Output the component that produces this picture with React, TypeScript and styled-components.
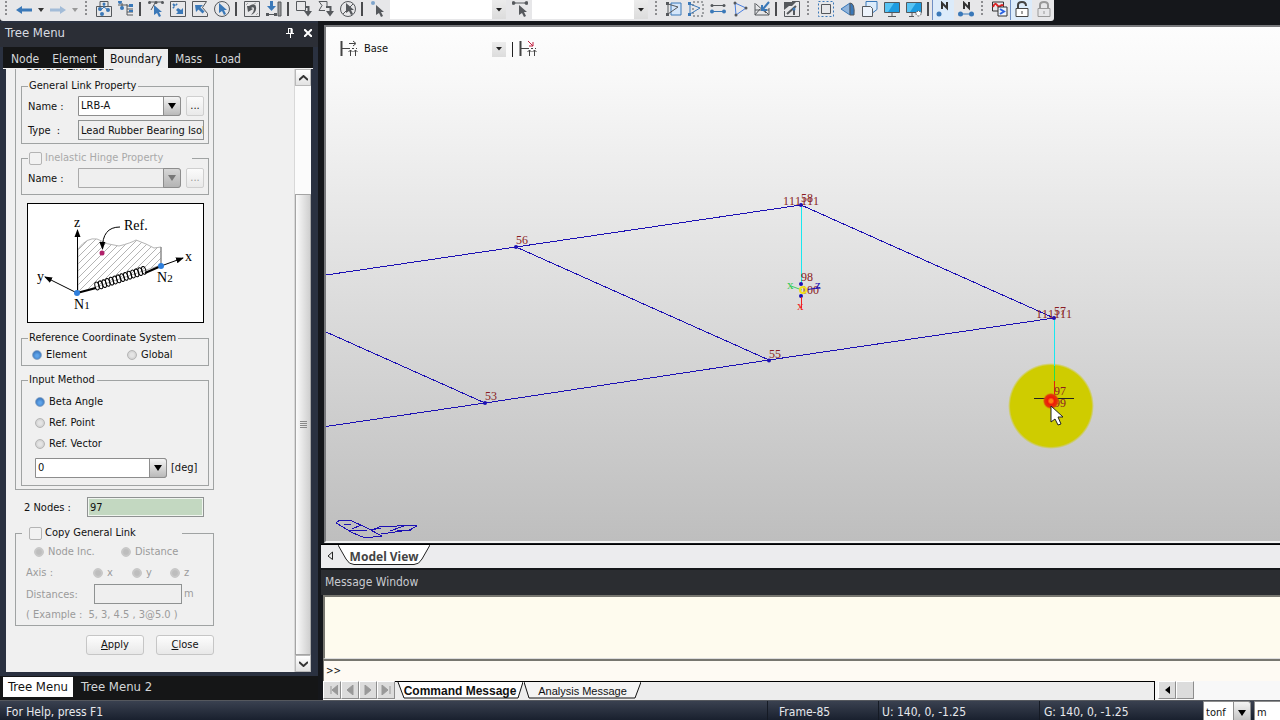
import React from "react";
import styled, { createGlobalStyle, css } from "styled-components";

const ui = `"DejaVu Sans Condensed", "Noto Sans", sans-serif`;
const BLUE = "#3a78b8";
const GRAY = "#55585c";

const GlobalStyle = createGlobalStyle`
  * { box-sizing: border-box; }
  body { margin: 0; background: #15171b; }
  button, input, select { font: inherit; color: inherit; margin: 0; }
`;

const Shell = styled.div`
  display: flex;
  flex-direction: column;
  height: 100vh;
  min-height: 720px;
  overflow: hidden;
  background: #15171b;
  color: #111;
  font: 11px/14px ${ui};
`;

const Workspace = styled.div`
  display: grid;
  grid-template-columns: 321px minmax(0, 1fr);
  flex: 1;
  min-height: 0;
`;

/* ---------- toolbar ---------- */

const Toolbar = styled.div`
  display: flex;
  align-items: flex-start;
  align-self: flex-start;
  height: 21px;
  background: #e7e7e9;
  border-radius: 0 0 3px 3px;
`;

const ToolButton = styled.button<{ $on?: boolean }>`
  display: flex;
  justify-content: center;
  width: 22px;
  height: 20px;
  padding: 1px 0 0;
  border: 0;
  border-left: 1px solid ${(p) => (p.$on ? "#6f8fc4" : "transparent")};
  background: ${(p) => (p.$on ? "#dcebfa" : "transparent")};
`;

const CaretButton = styled(ToolButton)`
  width: 12px;
`;

const Grip = styled.span`
  width: 12px;
  height: 17px;
  background: radial-gradient(circle, #8d8d90 1px, transparent 1px) 4px 0 / 4px 4px repeat-y;
`;

const Divider = styled.span`
  width: 2px;
  height: 14px;
  margin: 2px 3px 0;
  background: #4a4b4e;
`;

const Combo = styled.span<{ $w: string; $h: number; $variant: "flat" | "form" | "disabled" }>`
  display: grid;
  grid-template-columns: minmax(0, 1fr) auto;
  flex: none;
  width: ${(p) => p.$w};
  height: ${(p) => p.$h}px;
  select {
    grid-area: 1 / 1 / 2 / 3;
    appearance: none;
    min-width: 0;
    padding: 0 18px 0 2px;
    border: 0;
    border-radius: 0 3px 3px 0;
    background: #fff;
    outline: 0;
    ${(p) =>
      p.$variant !== "flat" &&
      css`
        border: 1px solid #8d8d8d;
      `}
    ${(p) =>
      p.$variant === "disabled" &&
      css`
        background: #efefef;
      `}
  }
`;

const ComboArrow = styled.span<{ $variant: "flat" | "form" | "disabled" }>`
  grid-area: 1 / 2;
  display: flex;
  align-items: center;
  justify-content: center;
  width: 14px;
  z-index: 1;
  background: linear-gradient(#ececec, #dcdcdc);
  pointer-events: none;
  ${(p) =>
    p.$variant !== "flat" &&
    css`
      width: 18px;
      border: 1px solid #8d8d8d;
      border-radius: 0 3px 3px 0;
      background: ${p.$variant === "disabled" ? "linear-gradient(#d6d6d6, #b4b4b4)" : "linear-gradient(#f4f4f4, #b9b9b9)"};
    `}
`;

const ComboSlot = styled.span`
  display: flex;
  margin: 0 2px;
`;

function Select(props: {
  label: string;
  w: string;
  h?: number;
  value?: string;
  variant?: "flat" | "form" | "disabled";
}) {
  const v = props.variant ?? "form";
  return (
    <Combo $w={props.w} $h={props.h ?? 20} $variant={v}>
      <select aria-label={props.label} disabled={v === "disabled"}>
        <option>{props.value ?? ""}</option>
      </select>
      <ComboArrow $variant={v}>
        {v === "flat" ? (
          <svg width="6" height="4"><path d="M0 0h6L3 3.500z" fill="#222" /></svg>
        ) : (
          <svg width="8" height="6"><path d="M0 0h8L4 6z" fill={v === "disabled" ? "#777" : "#000"} /></svg>
        )}
      </ComboArrow>
    </Combo>
  );
}

const Pointer = ({ x = 0, y = 0, c = BLUE }: { x?: number; y?: number; c?: string }) => (
  <path transform={`translate(${x} ${y})`} d="M0 0l8 7H5l2 4-2 1-2-4-3 2z" fill={c} stroke="none" />
);

const icons: Record<string, React.ReactNode> = {
  undo: <path d="M0 9l6-4v2.500h10v3H6V13z" fill={BLUE} stroke="none" />,
  redo: <path d="M16 9l-6-4v2.500H0v3h10V13z" fill="#a3bcd8" stroke="none" />,
  groups: (
    <>
      <path d="M4 5V.5h8V5M.5 5.500h15v10H.5z" />
      <path d="M8 3v3l-4 4M8 6l4 3" stroke={BLUE} />
      <g fill={BLUE} stroke="none"><circle cx="8" cy="3" r="1.500" /><circle cx="4" cy="8" r="2" /><circle cx="12" cy="9" r="2" /><circle cx="6" cy="13" r="2" /></g>
    </>
  ),
  tree: (
    <>
      <path d="M4 2v4M4 4h5M9 3v11M9 5h6M9 8h6M9 11h6M9 14h6M0 4h4" />
      <g fill={BLUE} stroke="none"><circle cx="2" cy="1" r="2" /><circle cx="4" cy="7" r="2" /><path d="M11 3h4v3h-4zM11 9h4v2h-4z" /></g>
    </>
  ),
  polySelect: (
    <>
      <path d="M1 1h14M7 2L3 9" />
      <g fill={GRAY} stroke="none"><circle cx="1.500" cy="1.500" r="1.500" /><circle cx="8" cy="1.500" r="1.500" /><circle cx="14.500" cy="1.500" r="1.500" /></g>
      <Pointer x={6} y={4} />
    </>
  ),
  windowSelect: (
    <>
      <path d="M.5.5h15v15H.5z" />
      <path d="M3 3l2 2M6 3l1 1M3 6l1 1" stroke={BLUE} strokeWidth="2" />
      <path d="M13 13H6l2-2-2-2 2-2 3 2 2-2z" fill={BLUE} stroke="none" />
    </>
  ),
  polygonSelect: (
    <>
      <path d="M.5.500h14l-4 6 5 6v3H.5z" />
      <path d="M3 4h8L8.500 6.500l4 4-2 2-4-4L4 11z" fill={BLUE} stroke="none" />
    </>
  ),
  circleSelect: (<><circle cx="8" cy="8" r="7.500" /><Pointer x={5} y={2} /></>),
  planeSelect: (
    <>
      <path d="M.5.500h15v15H.5z" />
      <path d="M3 5l1 6 5-3-2-1q3-2 3 1t-3 6q6-3 5-8t-7-1z" fill={GRAY} stroke="none" />
      <path d="M2 4l2-2M10 3l2-1M12 14l2-2" stroke="#aaa" />
    </>
  ),
  volumeSelect: (
    <>
      <path d="M5.500 0v5" stroke={BLUE} strokeWidth="3" /><path d="M1 5h9l-4.500 5z" fill={BLUE} stroke="none" />
      <path d="M1 13.500h9" /><path d="M12 1h3v14h-3z" fill="#999" />
      <path d="M0 12h3v3H0zM8 12h3v3H8z" fill={GRAY} stroke="none" />
    </>
  ),
  prevSelect: (<><path d="M.5.500h9v9h-9z" /><path d="M9 6h3.500v4" strokeWidth="2" /><path d="M8 10h8l-4 5.500z" fill={GRAY} stroke="none" /></>),
  unselect: (<><path d="M9 6V.500H1l3 4-3 5h6" /><path d="M8 6h4.500v4" strokeWidth="2" /><path d="M8 10h8l-4 5.500z" fill={GRAY} stroke="none" /></>),
  unselectCircle: (<><circle cx="8" cy="8" r="7.500" /><Pointer x={6} y={2} c={GRAY} /><path d="M3 13L13 3" /></>),
  nodePick: (<><circle cx="3" cy="2" r="2" fill={BLUE} stroke="none" opacity=".6" /><Pointer x={6} y={4} c={GRAY} /></>),
  elementPick: (
    <>
      <path d="M2 2h12" /><circle cx="1.500" cy="2" r="1.500" fill={GRAY} /><circle cx="14.500" cy="2" r="1.500" fill={GRAY} />
      <Pointer x={7} y={4} c={GRAY} />
    </>
  ),
  activate: (
    <>
      <path d="M5 2h10v12H5z" fill="#d4e6fa" stroke={BLUE} /><path d="M2 2v12M2 3l10 3-10 7" />
      <path d="M0 1h3v3H0zM0 12h3v3H0z" fill={GRAY} stroke="none" />
    </>
  ),
  inactivate: (
    <>
      <path d="M5 1h10v14H5z" strokeDasharray="2 2" /><path d="M2 2v12M2 3l10 4-10 6" stroke={BLUE} />
      <path d="M0 1h3v3H0zM0 12h3v3H0z" fill={BLUE} stroke="none" />
    </>
  ),
  activeAll: (
    <>
      <path d="M1 4.500h14" /><path d="M1 10.500h14" stroke={BLUE} />
      <g fill={GRAY} stroke="none"><circle cx="2" cy="4.500" r="1.500" /><circle cx="14" cy="4.500" r="1.500" /></g>
      <g fill={BLUE} stroke="none"><circle cx="2" cy="10.500" r="2" /><circle cx="14" cy="10.500" r="2" /></g>
    </>
  ),
  triangle: (
    <>
      <path d="M3 2l11 5-10 7z" stroke="#4a7fe0" />
      <g fill={GRAY} stroke="none"><circle cx="3" cy="2" r="1.500" /><circle cx="14" cy="7" r="1.500" /><circle cx="4" cy="14" r="1.500" /></g>
    </>
  ),
  previousActive: (
    <>
      <path d="M1 2v12h14V7M1 14l5-6M1 9h14M2 3l10 9M15 14L9 8" /><path d="M15 1l-6 7M8 4v5h5" stroke={BLUE} strokeWidth="2" />
    </>
  ),
  identity: (
    <>
      <path d="M8 .500h7.500v15H.5V10" /><path d="M0 1h8l4 0-4 4H5l-5 4z" fill={GRAY} stroke="none" /><path d="M3 13L12 5M10 14V8" strokeWidth="2" /><circle cx="10" cy="8" r="1.500" fill={BLUE} stroke="none" />
    </>
  ),
  zoomFit: (
    <>
      <path d="M3.500 3.500h9v9h-9z" /><path d="M.5.500h15v15H.5z" stroke={BLUE} strokeDasharray="2 2" />
    </>
  ),
  perspective: (<><path d="M1 8l9-6v12z" fill="#8fb4dc" stroke={BLUE} /><path d="M10 2q5 0 4 12h-4z" fill={BLUE} stroke={GRAY} /></>),
  hidden: (<><path d="M4 .500h11v8l-4 3H4z" fill="#dcecfb" stroke={BLUE} /><path d="M.5 5.500h8l2 2v8H.5z" fill="#eef4fb" /></>),
  display: (<><path d="M.5 1.500h15v10H.5z" fill="#1d9be0" /><path d="M1 2h9l-6 9H1z" fill="#58c4f4" stroke="none" /><path d="M8 12v3M4 15.500h8" /></>),
  displayOptions: (
    <><path d="M.5 1.500h15v10H.5z" fill="#1d9be0" /><path d="M1 2h9l-6 9H1z" fill="#58c4f4" stroke="none" /><path d="M6 12v3M3 15.500h5" /><circle cx="12.500" cy="12.500" r="2.500" strokeDasharray="2 1" fill="#fff" /></>
  ),
  nodeNumber: (<><path d="M6 8V2l5 5V1" strokeWidth="2" stroke="#333" /><circle cx="3" cy="13" r="2.500" fill={BLUE} stroke="none" /></>),
  elementNumber: (
    <><path d="M6 8V2l5 5V1" strokeWidth="2" stroke="#333" /><path d="M2 13h12" stroke={BLUE} /><circle cx="2.500" cy="13" r="2.500" fill={BLUE} stroke="none" /><circle cx="13.500" cy="13" r="2.500" fill={BLUE} stroke="none" /></>
  ),
  redraw: (
    <><path d="M.5 1h11v9H.5z" stroke="#333" /><path d="M1 6c2-5 3-3 5-1s4-3 5 0" stroke="#d22" strokeWidth="2" /><path d="M6 6h9v9H6z" fill="#eef4fb" stroke="#333" /><path d="M8 8l4 2.500L8 13" stroke="#2c62e0" strokeWidth="2" /></>
  ),
  unlock: (<><path d="M2 7.500h12v8H2z" fill="#fff" stroke="#444" /><path d="M4 7V4q0-3 4-3t4 4" stroke="#444" strokeWidth="2" /><path d="M8 10v3" stroke="#444" /></>),
  lock: (<><path d="M2 7.500h12v8H2z" stroke="#999" /><path d="M4 7V4q0-3 4-3t4 3v3" stroke="#999" strokeWidth="2" /><path d="M8 10v3" stroke="#999" /></>),
};

function Tool({ name, on }: { name: string; on?: boolean }) {
  return (
    <ToolButton aria-label={name} $on={on}>
      <svg width="16" height="16" viewBox="0 0 16 16" fill="none" stroke={GRAY}>{icons[name]}</svg>
    </ToolButton>
  );
}

function Caret({ label, c }: { label: string; c: string }) {
  return (
    <CaretButton aria-label={label}>
      <svg width="6" height="16"><path d="M0 7h6L3 11z" fill={c} /></svg>
    </CaretButton>
  );
}

const Tools = ({ names }: { names: string[] }) => <>{names.map((n) => <Tool key={n} name={n} />)}</>;

function MainToolbar() {
  return (
    <Toolbar role="toolbar">
      <Grip />
      <Tool name="undo" />
      <Caret label="undo list" c="#333" />
      <Tool name="redo" />
      <Caret label="redo list" c="#999" />
      <Grip />
      <Tools names={["groups", "tree"]} />
      <Divider />
      <Tools names={["polySelect", "windowSelect", "polygonSelect", "circleSelect"]} />
      <Divider />
      <Tools names={["planeSelect", "volumeSelect"]} />
      <Divider />
      <Tools names={["prevSelect", "unselect", "unselectCircle"]} />
      <Divider />
      <Tool name="nodePick" />
      <ComboSlot><Select label="Node selection" w="116px" h={19} variant="flat" /></ComboSlot>
      <Tool name="elementPick" />
      <ComboSlot><Select label="Element selection" w="116px" h={19} variant="flat" /></ComboSlot>
      <Grip />
      <Tools names={["activate", "inactivate", "activeAll", "triangle", "previousActive"]} />
      <Divider />
      <Tool name="identity" />
      <Grip />
      <Tools names={["zoomFit", "perspective", "hidden", "display", "displayOptions"]} />
      <Divider />
      <Tool name="nodeNumber" on />
      <Tool name="elementNumber" />
      <Grip />
      <Tool name="redraw" />
      <Tool name="unlock" on />
      <Tool name="lock" />
    </Toolbar>
  );
}

/* ---------- left dock ---------- */

const Dock = styled.aside`
  display: flex;
  flex-direction: column;
  min-height: 0;
  padding-top: 2px;
  margin-right: 3px;
  background: #2a3140;
`;

const DockTitle = styled.header`
  display: flex;
  align-items: center;
  gap: 10px;
  height: 24px;
  padding: 0 6px 4px 5px;
  background: #2b2e36;
  color: #d9dce2;
  font-size: 13px;
  line-height: 18px;
  h2 { flex: 1; margin: 0; font: inherit; }
`;

const PlainButton = styled.button`
  display: flex;
  padding: 0;
  border: 0;
  background: none;
`;

const TabStrip = styled.nav`
  display: flex;
  gap: 1px;
  height: 22px;
  margin: 0 5px 0 3px;
  padding: 2px 2px 0;
  background: #151617;
  border-bottom: 1px solid #f2f2f2;
`;

const Tab = styled.button<{ $active?: boolean }>`
  padding: 0 6px;
  border: 0;
  background: ${(p) => (p.$active ? "#ededee" : "transparent")};
  color: ${(p) => (p.$active ? "#111" : "#d4d6d9")};
  font-size: 12px;
  line-height: 18px;
`;

const DockBody = styled.div`
  display: flex;
  flex: 1;
  min-height: 0;
  margin: 0 7px 0 6px;
  background: #f0f0f0;
`;

/* Scrolled to the end, so the form keeps its last row in view. */
const FormScroll = styled.div`
  display: flex;
  flex-direction: column;
  justify-content: flex-end;
  flex: 1;
  min-width: 0;
  overflow: hidden;
`;

const Form = styled.form`
  display: flex;
  flex-direction: column;
  width: 199px;
  margin-left: 9px;
  padding-bottom: 17px;
`;

const Group = styled.fieldset<{ $pad: string; $gap?: number; $top?: number }>`
  display: flex;
  flex-direction: column;
  gap: ${(p) => p.$gap ?? 0}px;
  min-width: 0;
  margin: ${(p) => p.$top ?? 0}px 0 0;
  padding: ${(p) => p.$pad};
  border: 1px solid #a0a3a3;
`;

const Legend = styled.legend<{ $w?: number; $muted?: boolean; $indent?: number }>`
  display: flex;
  align-items: center;
  gap: 3px;
  height: 14px;
  width: ${(p) => (p.$w ? `${p.$w}px` : "auto")};
  margin-left: ${(p) => p.$indent ?? 0}px;
  padding: 0 2px 0 1px;
  color: ${(p) => (p.$muted ? "#a9a9a9" : "#111")};
  white-space: nowrap;
`;

const Row = styled.div<{ $h?: number; $gap?: number; $muted?: boolean }>`
  display: flex;
  align-items: center;
  gap: ${(p) => p.$gap ?? 0}px;
  height: ${(p) => p.$h ?? 20}px;
  color: ${(p) => (p.$muted ? "#9b9b9b" : "#111")};
  white-space: nowrap;
`;

const FieldName = styled.label<{ $w: number }>`
  width: ${(p) => p.$w}px;
  flex: none;
  padding-top: 2px;
`;

const Choice = styled.label<{ $w?: number }>`
  display: flex;
  align-items: center;
  gap: 4px;
  width: ${(p) => (p.$w ? `${p.$w}px` : "auto")};
`;

const Radio = styled.input.attrs({ type: "radio" })`
  appearance: none;
  width: 10px;
  height: 10px;
  flex: none;
  border: 1px solid #b5b5b5;
  border-radius: 50%;
  background: radial-gradient(circle, #e4e4e4 30%, #c4c4c4);
  &:checked {
    border-color: #8aa5c6;
    background: radial-gradient(circle at 50% 60%, #5fa4ea 20%, #2a62a8);
  }
  &:disabled { background: radial-gradient(circle, #bdbdbd 40%, #d9d9d9); border-color: #c8c8c8; }
`;

const Check = styled.input.attrs({ type: "checkbox" })`
  appearance: none;
  width: 13px;
  height: 13px;
  flex: none;
  border: 1px solid #b4b4b4;
  border-radius: 2px;
  background: #f2f2f2;
`;

const Field = styled.input<{ $tone?: "green" | "off"; $w?: number }>`
  width: ${(p) => (p.$w ? `${p.$w}px` : "auto")};
  flex: ${(p) => (p.$w ? "none" : "1")};
  min-width: 0;
  height: 20px;
  padding: 0 0 0 2px;
  border: 1px solid #8f9292;
  border-radius: 0;
  background: ${(p) => (p.$tone === "green" ? "#c3d8c1" : "#efefef")};
  box-shadow: inset 0 0 0 1px ${(p) => (p.$tone === "green" ? "#f0f5ef" : "transparent")};
`;

const SmallButton = styled.button`
  width: 19px;
  height: 20px;
  margin-left: 5px;
  padding: 0;
  border: 1px solid #cfcfcf;
  border-radius: 2px;
  background: linear-gradient(#fbfbfb, #e9e9e9);
  &:disabled { color: #999; }
`;

const Figure = styled.figure`
  height: 120px;
  margin: 8px 5px 0 6px;
  border: 1px solid #000;
  background: #fff;
  svg { display: block; }
`;

const Actions = styled.div`
  display: flex;
  justify-content: flex-end;
  gap: 12px;
  margin-top: 9px;
`;

const PushButton = styled.button`
  width: 58px;
  height: 20px;
  padding: 0;
  border: 1px solid #c6c6c6;
  border-radius: 3px;
  background: linear-gradient(#fdfdfd, #e8e8e8);
`;

const ScrollBar = styled.div`
  display: flex;
  flex-direction: column;
  width: 17px;
  background: #fbfbfb;
  border-left: 1px solid #d8d8d8;
`;

const ScrollButton = styled.button`
  display: flex;
  align-items: center;
  justify-content: center;
  height: 17px;
  padding: 0;
  border: 1px solid #b9b9b9;
  background: linear-gradient(#fff, #e2e2e2);
`;

const ScrollTrack = styled.div`
  display: flex;
  flex: 1;
  align-items: flex-end;
`;

const ScrollThumb = styled.div`
  display: flex;
  align-items: center;
  justify-content: center;
  width: 100%;
  height: 81%;
  border: 1px solid #a4a4a4;
  background: linear-gradient(90deg, #fafafa, #cfcfcf);
`;

const DockTabs = styled.nav`
  display: flex;
  height: 24px;
  margin-top: 4px;
  padding: 1px 3px 3px;
  background: #151617;
`;

const DockTab = styled(Tab)`
  margin-right: 3px;
  padding: 0 5px;
  background: ${(p) => (p.$active ? "#fff" : "transparent")};
  font-size: 13px;
`;

function LinkDiagram() {
  const coils = Array.from({ length: 14 }, (_, i) => ({ x: 70 + i * 3.6, y: 83 - i * 1.2 }));
  return (
    <svg width="175" height="118" viewBox="1 1 175 118" fill="none" stroke="#000">
      <defs>
        <pattern id="hatch" width="7" height="7" patternUnits="userSpaceOnUse">
          <path d="M-1 8L8-1" stroke="#b4b4b4" />
        </pattern>
        <marker id="tip" orient="auto" markerUnits="userSpaceOnUse" markerWidth="8" markerHeight="8" refX="7" refY="4">
          <path d="M0 1l8 3-8 3z" fill="#000" stroke="none" />
        </marker>
      </defs>
      <path d="M51 46Q60 34 70 36Q80 42 92 43Q104 40 109 37Q120 41 127 45L134 44V62L51 90z" fill="url(#hatch)" stroke="#b5b5b5" />
      <path d="M134 44v18" stroke="#777" />
      <path d="M50.500 90V27" markerEnd="url(#tip)" />
      <path d="M50 90L18 74" markerEnd="url(#tip)" />
      <path d="M134 63l22-8" markerEnd="url(#tip)" />
      <path d="M50 90l19-5M118 70l16-7" strokeWidth="2" />
      {coils.map((c) => <ellipse key={c.x} cx={c.x} cy={c.y} rx="2" ry="4" transform={`rotate(-15 ${c.x} ${c.y})`} />)}
      <path d="M93 24Q75 24 75.500 46" markerEnd="url(#tip)" />
      <circle cx="75" cy="50" r="2.500" fill="#b0206a" stroke="none" />
      <g fill="#2f7fdc" stroke="none"><circle cx="50" cy="90" r="3" /><circle cx="134" cy="63" r="3" /></g>
      <g fill="#000" stroke="none" fontFamily="'Liberation Serif', serif" fontSize="14">
        <text x="47" y="24">z</text>
        <text x="97" y="27">Ref.</text>
        <text x="158" y="58">x</text>
        <text x="10" y="78">y</text>
        <text x="47" y="106">N<tspan fontSize="11">1</tspan></text>
        <text x="130" y="79">N<tspan fontSize="11">2</tspan></text>
      </g>
    </svg>
  );
}

function LinkForm() {
  return (
    <Form onSubmit={(e) => e.preventDefault()}>
      <Group $pad="5px 4px 3px 5px">
        <Legend $indent={3}>General Link Data</Legend>
        <Group $pad="3px 4px 3px 6px" $gap={4}>
          <Legend>General Link Property</Legend>
          <Row>
            <FieldName $w={50}>Name :</FieldName>
            <Select label="Property name" w="103px" value="LRB-A" />
            <SmallButton>...</SmallButton>
          </Row>
          <Row>
            <FieldName $w={50} htmlFor="type">Type&nbsp; :</FieldName>
            <Field id="type" readOnly value="Lead Rubber Bearing Isolator" />
          </Row>
        </Group>
        <Group $pad="3px 4px 6px 6px" $top={7}>
          <Legend $w={164} $muted><Check id="hinge" disabled /><label htmlFor="hinge">Inelastic Hinge Property</label></Legend>
          <Row>
            <FieldName $w={50}>Name :</FieldName>
            <Select label="Hinge name" w="103px" variant="disabled" />
            <SmallButton disabled>...</SmallButton>
          </Row>
        </Group>
        <Figure><LinkDiagram /></Figure>
        <Group $pad="3px 4px 3px 10px" $top={8}>
          <Legend $indent={-4}>Reference Coordinate System</Legend>
          <Row $h={14}>
            <Choice $w={95}><Radio name="ref" defaultChecked />Element</Choice>
            <Choice><Radio name="ref" />Global</Choice>
          </Row>
        </Group>
        <Group $pad="8px 4px 7px 13px" $gap={7} $top={7}>
          <Legend $indent={-7}>Input Method</Legend>
          <Row $h={14}><Choice><Radio name="method" defaultChecked />Beta Angle</Choice></Row>
          <Row $h={14}><Choice><Radio name="method" />Ref. Point</Choice></Row>
          <Row $h={14}><Choice><Radio name="method" />Ref. Vector</Choice></Row>
          <Row $gap={4}><Select label="Beta angle" w="132px" value="0" />[deg]</Row>
        </Group>
      </Group>
      <NodesRow>
        <FieldName $w={63} htmlFor="nodes">2 Nodes :</FieldName>
        <Field id="nodes" $tone="green" $w={117} defaultValue="97" />
      </NodesRow>
      <Group $pad="2px 4px 0 10px" $gap={1} $top={9}>
        <Legend $w={160} $indent={-4}><LegendInner><Check id="copy" /><label htmlFor="copy">Copy General Link</label></LegendInner></Legend>
        <Row $muted>
          <Indent $w={8} />
          <Choice $w={87}><Radio name="copy" disabled />Node Inc.</Choice>
          <Choice><Radio name="copy" disabled />Distance</Choice>
        </Row>
        <Row $muted>
          <Indent $w={67}>Axis :</Indent>
          <Choice $w={39}><Radio name="axis" disabled />x</Choice>
          <Choice $w={38}><Radio name="axis" disabled />y</Choice>
          <Choice><Radio name="axis" disabled />z</Choice>
        </Row>
        <Row $muted $gap={2}>
          <FieldName $w={66} htmlFor="dist">Distances:</FieldName>
          <Field id="dist" disabled $tone="off" $w={88} />m
        </Row>
        <Row $muted $gap={6}><span>( Example :</span><span>5, 3, 4.5 , 3@5.0 )</span></Row>
      </Group>
      <Actions>
        <PushButton><u>A</u>pply</PushButton>
        <PushButton><u>C</u>lose</PushButton>
      </Actions>
    </Form>
  );
}

const NodesRow = styled(Row)`
  margin-top: 7px;
  padding-left: 9px;
`;

const LegendInner = styled.span`
  display: flex;
  align-items: center;
  gap: 3px;
  padding-left: 6px;
`;

const Indent = styled.span<{ $w: number }>`
  width: ${(p) => p.$w}px;
  flex: none;
`;

/* ---------- model view ---------- */

const Main = styled.main`
  display: flex;
  flex-direction: column;
  min-width: 0;
  min-height: 0;
  padding-top: 4px;
`;

const Viewport = styled.section`
  display: flex;
  flex-direction: column;
  position: relative;
  flex: 1;
  min-height: 0;
  margin-left: 3px;
  border: 2px solid #77787b;
  border-right: 0;
  border-bottom-color: #f2f2f2;
  background: linear-gradient(#fdfdfd, #f8f8f8 10%, #bebebe);
  overflow: hidden;
`;

const ViewBar = styled.div`
  display: flex;
  align-items: center;
  gap: 6px;
  height: 16px;
  margin: 14px 0 0 14px;
  select { background: transparent; padding-left: 0; }
`;

const Bar = styled.span`
  width: 1px;
  height: 15px;
  background: #222;
`;

const Scene = styled.svg`
  position: absolute;
  inset: 0 auto auto 0;
  pointer-events: none;
`;

function ConstraintIcon({ color }: { color: string }) {
  return (
    <svg width="18" height="18" viewBox="0 0 18 18" fill="none" stroke="#444">
      <path d="M1.500 1v15" strokeWidth="2" />
      <path d="M2 8.500h8M12 8.500h2M16 8.500h1" />
      <path d={color === "#c22040" ? "M9 1l5 5M14 2v4h-4" : "M9 3.500h6M13 1l3 2.500L13 6"} stroke={color} />
      <path d="M10.500 10v6M8.500 12l2-2 2 2M15.500 10v6M13.500 12l2-2 2 2" />
    </svg>
  );
}

function ModelScene() {
  return (
    <Scene width="954" height="517" viewBox="326 27 954 517">
      <defs>
        <radialGradient id="halo">
          <stop offset="94%" stopColor="#cfcc00" /><stop offset="100%" stopColor="#cfcc00" stopOpacity="0" />
        </radialGradient>
        <radialGradient id="click">
          <stop offset="20%" stopColor="#ff7a10" /><stop offset="45%" stopColor="#f01808" /><stop offset="80%" stopColor="#e03808" /><stop offset="100%" stopColor="#e07008" stopOpacity=".3" />
        </radialGradient>
      </defs>
      <circle cx="1051" cy="406" r="43" fill="url(#halo)" />
      <g fill="none" stroke="#1c10b4" shapeRendering="crispEdges">
        <path d="M326 275L516 247L801 205L1054 318L769 360L485 403L326 426.500" />
        <path d="M516 247L769 360M326 332L485 403" />
        <path d="M336 523l4-3 12 1 13 6 17 9-17 2-12-5-17-10M352 529l9-4 10 5 10-2M350 531l17-1M344 524l7 1M372 530l7-3 18-1 16-1 4 1-8 4-28 4M390 531l14-5M397 530h14l3-3" />
      </g>
      <g fill="#18e8f0"><rect x="801" y="207" width="1" height="76" /><rect x="1054" y="320" width="1" height="46" /></g>
      <rect x="1054" y="366" width="1" height="15" fill="#20e050" />
      <rect x="1054" y="381" width="1" height="17" fill="#e02010" />
      <g fill="#1c10b4">
        {[[801, 205], [1054, 318], [516, 247], [769, 360.5], [485, 403], [801, 284], [801, 296]].map(([x, y]) => (
          <circle key={`${x}-${y}`} cx={x} cy={y} r="2" />
        ))}
      </g>
      <SceneLabels fill="#8a1c22" fontSize="12">
        <text x="783" y="205">111111</text><text x="801" y="202">58</text>
        <text x="1036" y="318">111111</text><text x="1054" y="315">57</text>
        <text x="516" y="244">56</text><text x="769" y="358">55</text><text x="485" y="400">53</text>
        <text x="801" y="281">98</text><text x="801" y="294">100</text>
        <text x="1054" y="395">97</text><text x="1054" y="407">99</text>
      </SceneLabels>
      <path d="M791 286l11 4" stroke="#40d060" />
      <path d="M808 289.500l12-2" stroke="#1c10b4" />
      <path d="M801.500 297v11" stroke="#f02020" />
      <SceneLabels fontSize="13">
        <text x="787" y="289" fill="#30c850">x</text>
        <text x="815" y="289" fill="#1c10b4">z</text>
        <text x="797" y="310" fill="#f02020">x</text>
      </SceneLabels>
      <circle cx="803" cy="290" r="3" fill="none" stroke="#f0e020" strokeWidth="2" />
      <path d="M1034 398.500h40" stroke="#222" />
      <circle cx="1051" cy="401" r="8" fill="url(#click)" />
      <path d="M1051 406v16l4-3 3 6 3-1-3-7h5z" fill="#fff" stroke="#222" />
    </Scene>
  );
}

const SceneLabels = styled.g`
  font-family: "Liberation Serif", serif;
  font-kerning: none;
`;

const SheetBar = styled.nav`
  display: flex;
  align-items: flex-start;
  height: 24px;
  margin-top: 1px;
  border-top: 1px solid #000;
  background: #ececee;
`;

const SheetTab = styled.button<{ $w: number; $h: number }>`
  display: grid;
  place-items: center;
  width: ${(p) => p.$w}px;
  height: ${(p) => p.$h}px;
  padding: 0;
  border: 0;
  background: none;
  color: #444;
  > * { grid-area: 1 / 1; }
  svg { display: block; }
`;

const ViewName = styled.span`
  z-index: 1;
  padding-top: 3px;
  font: bold 12px/17px "Noto Sans", sans-serif;
`;

const Prev = styled(PlainButton)`
  padding: 6px 5px 0 6px;
`;

/* ---------- message window ---------- */

const MessageTitle = styled.h2`
  height: 25px;
  margin: 2px 0 0;
  padding: 2px 4px 0;
  background: #2b2d31;
  color: #c9cbd0;
  font: 12px/20px ${ui};
`;

const MessageLog = styled.div`
  height: 64px;
  margin-left: 2px;
  border: 2px solid #77766f;
  border-right: 0;
  border-bottom: 1px solid #ddd;
  background: #fefbee;
`;

const CommandLine = styled.label`
  display: flex;
  align-items: center;
  height: 22px;
  margin: 0 0 0 2px;
  padding-left: 2px;
  border-top: 2px solid #77766f;
  border-left: 1px solid #77766f;
  background: #fefaf3;
  font-size: 10px;
  input { flex: 1; border: 0; outline: 0; padding: 0 4px; background: none; }
`;

const MessageTabs = styled.nav`
  display: flex;
  height: 19px;
  margin-left: 2px;
  background: #f8f8f8;
`;

const NavButton = styled.button`
  display: flex;
  align-items: center;
  justify-content: center;
  width: 18px;
  height: 18px;
  padding: 0;
  border: 1px solid #8d8d8d;
  border-left-color: #fff;
  border-top-color: #fff;
  background: #dcdcdc;
`;

const TabArea = styled.div`
  display: flex;
  gap: 1px;
  flex: 1;
  min-width: 0;
  padding-left: 2px;
  border-top: 1px solid #000;
  border-right: 1px solid #000;
  background: #ededed;
`;

const MessageName = styled.span<{ $active?: boolean }>`
  z-index: 1;
  color: #111;
  font: ${(p) => (p.$active ? "bold 12px" : "normal 11px")} / 16px "Liberation Sans", sans-serif;
`;

const HScroll = styled.div`
  display: flex;
  width: 125px;
  padding-left: 3px;
`;

/* ---------- status bar ---------- */

const Status = styled.footer`
  display: flex;
  height: 20px;
  border-top: 1px solid #55585e;
  background: linear-gradient(#3a4150, #19202e);
  color: #e6e8ec;
  font-size: 12px;
  line-height: 22px;
`;

const StatusCell = styled.span<{ $w?: number; $pad: number }>`
  flex: ${(p) => (p.$w ? "none" : "1")};
  width: ${(p) => (p.$w ? `${p.$w}px` : "auto")};
  padding-left: ${(p) => p.$pad}px;
  border-left: 1px solid ${(p) => (p.$w ? "#151a24" : "transparent")};
  white-space: nowrap;
`;

const Units = styled.div`
  display: flex;
  gap: 3px;
  width: 77px;
  overflow: hidden;
  color: #111;
  font-size: 11px;
`;

export default function App() {
  return (
    <>
      <GlobalStyle />
      <Shell>
        <MainToolbar />
        <Workspace>
          <Dock>
            <DockTitle>
              <h2>Tree Menu</h2>
              <PlainButton aria-label="Pin">
                <svg width="8" height="10" fill="none" stroke="#fff"><path d="M2 .500h4v5M2.500 0v5M0 5.500h8M4.500 6v4" /><path d="M5.500 1v4" strokeWidth="2" /></svg>
              </PlainButton>
              <PlainButton aria-label="Close panel">
                <svg width="8" height="8" stroke="#fff" strokeWidth="2"><path d="M0 0l8 8M8 0L0 8" /></svg>
              </PlainButton>
            </DockTitle>
            <TabStrip>
              <Tab>Node</Tab>
              <Tab>Element</Tab>
              <Tab $active>Boundary</Tab>
              <Tab>Mass</Tab>
              <Tab>Load</Tab>
            </TabStrip>
            <DockBody>
              <FormScroll><LinkForm /></FormScroll>
              <ScrollBar>
                <ScrollButton aria-label="Scroll up"><svg width="9" height="6" fill="none" stroke="#333" strokeWidth="2"><path d="M0 5l4.500-4L9 5" /></svg></ScrollButton>
                <ScrollTrack>
                  <ScrollThumb><svg width="7" height="8" stroke="#888"><path d="M0 .500h7M0 2.500h7M0 4.500h7M0 6.500h7" /></svg></ScrollThumb>
                </ScrollTrack>
                <ScrollButton aria-label="Scroll down"><svg width="9" height="6" fill="none" stroke="#333" strokeWidth="2"><path d="M0 1l4.500 4L9 1" /></svg></ScrollButton>
              </ScrollBar>
            </DockBody>
            <DockTabs>
              <DockTab $active>Tree Menu</DockTab>
              <DockTab>Tree Menu 2</DockTab>
            </DockTabs>
          </Dock>
          <Main>
            <Viewport>
              <ModelScene />
              <ViewBar>
                <ConstraintIcon color="#444" />
                <Select label="Constraint stage" w="142px" h={15} value="Base" variant="flat" />
                <Bar />
                <ConstraintIcon color="#c22040" />
              </ViewBar>
            </Viewport>
            <SheetBar>
              <Prev aria-label="Previous view"><svg width="6" height="10" fill="none" stroke="#222"><path d="M5.500 1v7.500L1 5z" /></svg></Prev>
              <SheetTab $w={92} $h={20}>
                <svg width="92" height="20"><path d="M0 0L8 14Q11 19.500 16 19.500H76Q81 19.500 84 14L92 0" fill="#fff" stroke="#222" /></svg>
                <ViewName>Model View</ViewName>
              </SheetTab>
            </SheetBar>
            <MessageTitle>Message Window</MessageTitle>
            <MessageLog />
            <CommandLine>&gt;&gt;<input aria-label="Command" /></CommandLine>
            <MessageTabs>
              {["M5 1v8M12 0v10L6 5z", "M9 0v10L3 5z", "M3 0v10l6-5z", "M10 1v8M2 0v10l6-5z"].map((d) => (
                <NavButton key={d} aria-label="Scroll tabs"><svg width="12" height="10" fill="#999" stroke="#999"><path d={d} /></svg></NavButton>
              ))}
              <TabArea>
                <SheetTab $w={126} $h={17}>
                  <svg width="126" height="17"><path d="M1 0L7 16H121L126 0" fill="#fff" stroke="#111" /></svg>
                  <MessageName $active>Command Message</MessageName>
                </SheetTab>
                <SheetTab $w={117} $h={17}>
                  <svg width="117" height="17"><path d="M0 0L5 16H111L117 0" fill="#f4f4f4" stroke="#111" /></svg>
                  <MessageName>Analysis Message</MessageName>
                </SheetTab>
              </TabArea>
              <HScroll>
                <NavButton aria-label="Scroll left"><svg width="5" height="8"><path d="M5 0v8L0 4z" /></svg></NavButton>
                <NavButton aria-label="Scroll position" />
              </HScroll>
            </MessageTabs>
          </Main>
        </Workspace>
        <Status>
          <StatusCell $pad={5}>For Help, press F1</StatusCell>
          <StatusCell $w={111} $pad={11}>Frame-85</StatusCell>
          <StatusCell $w={161} $pad={3}>U: 140, 0, -1.25</StatusCell>
          <StatusCell $w={164} $pad={4}>G: 140, 0, -1.25</StatusCell>
          <Units>
            <Select label="Force unit" w="48px" h={19} value="tonf" />
            <Select label="Length unit" w="48px" h={19} value="m" />
          </Units>
        </Status>
      </Shell>
    </>
  );
}
